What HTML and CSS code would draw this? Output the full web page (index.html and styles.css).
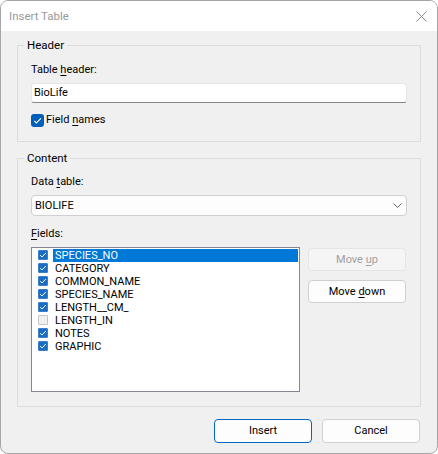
FILE: index.html
```html
<!DOCTYPE html>
<html>
<head>
<meta charset="utf-8">
<link rel="stylesheet" href="styles.css">
</head>
<body>
<div class="window">
  <div class="titlebar">
    <span class="title">Insert Table</span>
    <span class="close">
      <svg width="11" height="11" viewBox="0 0 11 11"><path d="M0.5 0.5 L10.5 10.5 M10.5 0.5 L0.5 10.5" stroke="#8a8a8a" stroke-width="1" fill="none"/></svg>
    </span>
  </div>
  <div class="body">
    <fieldset class="group group-header">
      <legend>Header</legend>
      <div class="group-inner inner-header">
        <div class="label">Table <u>h</u>eader:</div>
        <div class="textbox">BioLife</div>
        <div class="check-row">
          <span class="checkbox">
            <svg width="13" height="13" viewBox="0 0 13 13"><path d="M3.2 6.8 L5.4 9 L9.9 4.4" stroke="#fff" stroke-width="1.1" fill="none"/></svg>
          </span>
          <span class="check-label">Field <u>n</u>ames</span>
        </div>
      </div>
    </fieldset>
    <fieldset class="group group-content">
      <legend>Content</legend>
      <div class="group-inner inner-content">
        <div class="label">Data <u>t</u>able:</div>
        <div class="combo">
          <span class="combo-text">BIOLIFE</span>
          <svg class="chevron" width="9" height="5" viewBox="0 0 9 5"><path d="M0.5 0.5 L4.5 4.5 L8.5 0.5" stroke="#5f5f5f" stroke-width="1" fill="none"/></svg>
        </div>
        <div class="label label-fields"><u>F</u>ields:</div>
        <div class="fields-row">
          <div class="listbox">
            <div class="item selected"><span class="lcheck on"></span><span class="item-text">SPECIES_NO</span></div>
            <div class="item"><span class="lcheck on"></span><span class="item-text">CATEGORY</span></div>
            <div class="item"><span class="lcheck on"></span><span class="item-text">COMMON_NAME</span></div>
            <div class="item"><span class="lcheck on"></span><span class="item-text">SPECIES_NAME</span></div>
            <div class="item"><span class="lcheck on"></span><span class="item-text">LENGTH__CM_</span></div>
            <div class="item"><span class="lcheck"></span><span class="item-text">LENGTH_IN</span></div>
            <div class="item"><span class="lcheck on"></span><span class="item-text">NOTES</span></div>
            <div class="item"><span class="lcheck on"></span><span class="item-text">GRAPHIC</span></div>
          </div>
          <div class="side-buttons">
            <button class="btn btn-side btn-disabled">Move <u>u</u>p</button>
            <button class="btn btn-side">Move <u>d</u>own</button>
          </div>
        </div>
      </div>
    </fieldset>
    <div class="footer">
      <button class="btn btn-footer btn-default">Insert</button>
      <button class="btn btn-footer">Cancel</button>
    </div>
  </div>
</div>
</body>
</html>
```
FILE: styles.css
```css
* { box-sizing: border-box; }
html, body { margin: 0; padding: 0; background: #ffffff; }

.window {
  width: 438px;
  height: 454px;
  border: 1px solid #a6a6a6;
  border-radius: 8px;
  overflow: hidden;
  background: #f0f0f0;
  display: flex;
  flex-direction: column;
  font-family: Roboto, "Noto Sans", sans-serif;
  font-size: 11px;
  color: #000;
}

.titlebar {
  height: 30px;
  flex: none;
  background: #ffffff;
  display: flex;
  align-items: center;
  justify-content: space-between;
  padding: 0 10px 0 8px;
}
.title { color: #9a9a9a; font-size: 11.5px; line-height: 16px; }
.close { display: flex; width: 11px; height: 11px; margin-top: 1px; }

.body {
  flex: 1;
  display: flex;
  flex-direction: column;
  padding: 6px 16px 0 16px;
}

.group {
  margin: 0;
  padding: 0;
  border: 1px solid #dcdcdc;
  min-width: 0;
}
.group legend {
  margin-left: 6px;
  padding: 0 3px;
  line-height: 16px;
  height: 16px;
  font-size: 11.5px;
}
.group-content { margin-top: 8px; }

.group-inner { display: flex; flex-direction: column; }
.inner-header { padding: 9px 13px 13px 13px; }
.inner-content { padding: 8px 13px 14px 13px; }

.label { line-height: 16px; height: 16px; }
.label u, .check-label u, .btn u { text-underline-offset: 2px; text-decoration-thickness: 1px; }

.textbox {
  margin-top: 5px;
  height: 20px;
  background: #ffffff;
  border: 1px solid #e6e6e6;
  border-bottom-color: #868686;
  border-radius: 3px;
  padding: 0 2px;
  line-height: 18px;
}

.check-row {
  margin-top: 9px;
  height: 16px;
  display: flex;
  align-items: center;
}
.checkbox {
  width: 13px;
  height: 13px;
  border-radius: 3px;
  background: #005fb8;
  display: flex;
}
.check-label { margin-left: 2px; line-height: 16px; }

.combo {
  margin-top: 5px;
  height: 21px;
  background: #fdfdfd;
  border: 1px solid #d0d0d0;
  border-radius: 4px;
  padding: 0 4px 0 3px;
  display: flex;
  align-items: center;
  justify-content: space-between;
}
.combo-text { line-height: 18px; }

.label-fields { margin-top: 10px; }

.fields-row {
  margin-top: 5px;
  display: flex;
  gap: 8px;
  align-items: flex-start;
}

.listbox {
  width: 269px;
  height: 145px;
  flex: none;
  background: #ffffff;
  border: 1px solid #828790;
  padding: 1px 1px 0 6px;
}
.item {
  height: 13px;
  display: flex;
  align-items: flex-start;
}
.lcheck {
  width: 10px;
  height: 10px;
  margin-top: 1px;
  flex: none;
  border: 1px solid #c4c4c4;
  background: #f0f0f0;
  border-radius: 1px;
}
.lcheck.on {
  border-color: #3a7fcc;
  background: #1a6cc4 url("data:image/svg+xml,%3Csvg xmlns='http://www.w3.org/2000/svg' width='8' height='8' viewBox='0 0 8 8'%3E%3Cpath d='M1.2 4.2 L3 6 L6.8 2' stroke='white' stroke-width='1' fill='none'/%3E%3C/svg%3E") center / 8px 8px no-repeat;
}
.item-text {
  flex: 1;
  margin-left: 5px;
  padding: 0 2px;
  line-height: 13px;
  height: 13px;
  white-space: nowrap;
}
.item.selected .item-text { background: #0078d7; color: #ffffff; }

.side-buttons {
  display: flex;
  flex-direction: column;
  gap: 9px;
  margin-top: 1px;
}

.btn {
  font-family: inherit;
  font-size: 11px;
  color: #000;
  background: #fdfdfd;
  border: 1px solid #d0d0d0;
  border-radius: 4px;
  padding: 0;
  margin: 0;
  line-height: 16px;
}
.btn-side { width: 98px; height: 23px; }
.btn-disabled { color: #a0a0a0; background: #f5f5f5; border-color: #e5e5e5; }
.btn-footer { width: 98px; height: 24px; }
.btn-default { border-color: #0067c0; }

.footer {
  margin-top: 12px;
  display: flex;
  justify-content: flex-end;
  gap: 10px;
  padding-right: 1px;
}
```
